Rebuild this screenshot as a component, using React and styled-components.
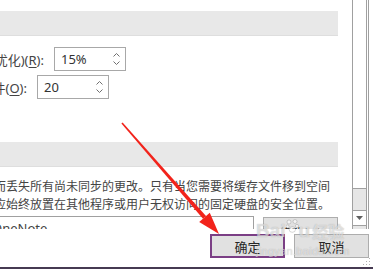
import React from 'react';
import styled, { createGlobalStyle } from 'styled-components';

const GlobalStyle = createGlobalStyle`
  html, body {
    margin: 0;
    padding: 0;
    background: #ffffff;
  }
  body {
    font-family: "Noto Sans", "Noto Sans CJK SC", sans-serif;
    color: #444444;
  }
`;

const Window = styled.div`
  position: relative;
  width: 373px;
  height: 269px;
  overflow: hidden;
  background: #ffffff;
  display: flex;
  flex-direction: column;
`;

const ScrollArea = styled.div`
  display: flex;
  height: 229px;
  flex-shrink: 0;
`;

const Viewport = styled.div`
  width: 352px;
  height: 229px;
  overflow: hidden;
  display: flex;
  flex-direction: column;
`;

const SectionBand = styled.div`
  width: 338px;
  height: 24px;
  flex-shrink: 0;
  margin-top: ${({ top }) => top}px;
  background: #e8e8e8;
  border-bottom: 1px solid #dedede;
`;

const SettingRow = styled.div`
  display: flex;
  align-items: center;
  margin-top: ${({ top }) => top}px;
  height: 24px;
`;

const LabelCell = styled.div`
  width: ${({ width }) => width}px;
  margin-right: 10px;
  display: flex;
  justify-content: flex-end;
  white-space: nowrap;
  font-size: 13px;
  color: #444444;
  flex-shrink: 0;
`;

const Key = styled.span`
  text-decoration: underline;
  text-underline-offset: 2px;
`;

const SpinBox = styled.div`
  box-sizing: border-box;
  width: 72px;
  height: 24px;
  border: 1px solid #a8a8a8;
  display: flex;
  align-items: center;
  justify-content: space-between;
  padding: 0 4px 0 6px;
  background: #ffffff;
`;

const SpinValue = styled.span`
  font-size: 13px;
  color: #333333;
`;

const SpinArrows = styled.div`
  display: flex;
  flex-direction: column;
  gap: 4px;
  padding-right: 1px;
`;

const Para = styled.div`
  margin-top: 10px;
  margin-left: -6px;
  font-size: 12px;
  line-height: 18px;
  color: #444444;
  font-family: "Noto Sans CJK SC", sans-serif;
  white-space: nowrap;
`;

const FieldRow = styled.div`
  display: flex;
  align-items: flex-start;
  margin-top: 3px;
  flex-shrink: 0;
`;

const PathField = styled.div`
  box-sizing: border-box;
  width: 264px;
  height: 23px;
  margin-left: -10px;
  border: 1px solid #a0a0a0;
  padding: 2px 0 0 1px;
  font-size: 13px;
  color: #444444;
  white-space: nowrap;
  overflow: hidden;
`;

const SideButton = styled.div`
  box-sizing: border-box;
  width: 75px;
  height: 23px;
  margin-left: 9px;
  margin-top: 1px;
  background: #e1e1e1;
  border: 1px solid #adadad;
  font-size: 12px;
  color: #262626;
  font-family: "Noto Sans CJK SC", sans-serif;
  display: flex;
  justify-content: center;
  padding-top: 6px;
`;

const ScrollBar = styled.div`
  box-sizing: border-box;
  width: 17px;
  height: 229px;
  border-right: 1px solid #a0a0a0;
  display: flex;
`;

const Track = styled.div`
  box-sizing: border-box;
  width: 15px;
  height: 100%;
  border-left: 1px solid #a0a0a0;
  border-right: 1px solid #a0a0a0;
  background: #e6e6e6;
  display: flex;
  flex-direction: column;
`;

const Thumb = styled.div`
  height: 188px;
  background: #ffffff;
  border-bottom: 1px solid #a0a0a0;
`;

const TrackGap = styled.div`
  flex: 1;
`;

const ArrowButton = styled.div`
  height: 14px;
  background: #ffffff;
  border-top: 1px solid #a0a0a0;
  border-bottom: 1px solid #a0a0a0;
  margin-bottom: 3px;
  display: flex;
  align-items: center;
  justify-content: center;
`;

const Footer = styled.div`
  display: flex;
  justify-content: flex-end;
  gap: 9px;
  padding: 5px 4px 0 0;
`;

const DialogButton = styled.div`
  box-sizing: border-box;
  width: 75px;
  height: 24px;
  background: #e1e1e1;
  border: ${({ primary }) => (primary ? '2px solid #7b3f85' : '1px solid #adadad')};
  font-size: 13px;
  color: #262626;
  font-family: "Noto Sans CJK SC", sans-serif;
  display: flex;
  align-items: center;
  justify-content: center;
`;

const BottomEdge = styled.div`
  margin-top: auto;
  height: 2px;
  background: #463a52;
`;

const Watermark = styled.div`
  position: absolute;
  left: 256px;
  top: 219px;
  pointer-events: none;
  display: flex;
  flex-direction: column;
  color: rgba(255, 255, 255, 0.55);
  text-shadow: 0 0 1px rgba(90, 90, 90, 0.45);
`;

const MarkLogo = styled.div`
  display: flex;
  align-items: flex-end;
  font-family: "Liberation Sans", sans-serif;
  font-weight: bold;
  font-size: 19px;
  line-height: 24px;
`;

const MarkCjk = styled.span`
  font-family: "Noto Sans CJK SC", sans-serif;
  font-size: 16px;
  margin-left: 2px;
`;

const MarkUrl = styled.div`
  font-family: "Liberation Sans", sans-serif;
  font-size: 11px;
  line-height: 12px;
  margin-top: 2px;
  letter-spacing: 0.3px;
`;

const Overlay = styled.svg`
  position: absolute;
  left: 0;
  top: 0;
  pointer-events: none;
`;

const Chevron = ({ up }) => (
  <svg width="7" height="4" viewBox="0 0 7 4">
    <polyline
      points={up ? '0.5,3.5 3.5,0.5 6.5,3.5' : '0.5,0.5 3.5,3.5 6.5,0.5'}
      fill="none"
      stroke="#707070"
      strokeWidth="1"
    />
  </svg>
);

const Spinner = ({ value }) => (
  <SpinBox>
    <SpinValue>{value}</SpinValue>
    <SpinArrows>
      <Chevron up />
      <Chevron />
    </SpinArrows>
  </SpinBox>
);

const PawDot = (props) => (
  <circle fill="rgba(255,255,255,0.6)" stroke="rgba(90,90,90,0.4)" strokeWidth="0.6" {...props} />
);

const App = () => (
  <Window>
    <GlobalStyle />
    <ScrollArea>
      <Viewport>
        <SectionBand top={11} />
        <SettingRow top={11}>
          <LabelCell width={44}>
            <span>
              优化)(<Key>R</Key>):
            </span>
          </LabelCell>
          <Spinner value="15%" />
        </SettingRow>
        <SettingRow top={4}>
          <LabelCell width={27}>
            <span>
              件(<Key>O</Key>):
            </span>
          </LabelCell>
          <Spinner value="20" />
        </SettingRow>
        <SectionBand top={43} />
        <Para>
          <div>而丢失所有尚未同步的更改。只有当您需要将缓存文件移到空间</div>
          <div>应始终放置在其他程序或用户无权访问的固定硬盘的安全位置。</div>
        </Para>
        <FieldRow>
          <PathField>OneNote</PathField>
          <SideButton>修改(M)</SideButton>
        </FieldRow>
      </Viewport>
      <ScrollBar>
        <Track>
          <Thumb />
          <TrackGap />
          <ArrowButton>
            <svg width="7" height="4" viewBox="0 0 7 4">
              <polygon points="0,0 7,0 3.5,4" fill="#606060" />
            </svg>
          </ArrowButton>
        </Track>
      </ScrollBar>
    </ScrollArea>
    <Footer>
      <DialogButton primary>确定</DialogButton>
      <DialogButton>取消</DialogButton>
    </Footer>
    <BottomEdge />

    <Watermark>
      <MarkLogo>
        <span>Bai</span>
        <svg width="13" height="14" viewBox="0 0 13 14" style={{ marginBottom: 10 }}>
          <PawDot cx="3" cy="3" r="2" />
          <PawDot cx="9" cy="2.5" r="2" />
          <PawDot cx="1.5" cy="7.5" r="1.6" />
          <PawDot cx="11" cy="7" r="1.6" />
          <ellipse cx="6.3" cy="10.5" rx="3.2" ry="2.8" fill="rgba(255,255,255,0.6)" stroke="rgba(90,90,90,0.4)" strokeWidth="0.6" />
        </svg>
        <span>u</span>
        <MarkCjk>经验</MarkCjk>
      </MarkLogo>
      <MarkUrl>jingyan.baidu.com</MarkUrl>
    </Watermark>

    <Overlay width="373" height="269" viewBox="0 0 373 269">
      <polygon
        points="122.6,122.5 121.4,123.5 203,218.7 206,216.1"
        fill="#f2231b"
      />
      <polygon points="219,234 199.2,222 209.8,212.8" fill="#f2231b" />
      <g fill="#b0b0b0">
        <rect x="369" y="258" width="1" height="1" />
        <rect x="366" y="261" width="1" height="1" />
        <rect x="369" y="261" width="1" height="1" />
        <rect x="363" y="264" width="1" height="1" />
        <rect x="366" y="264" width="1" height="1" />
        <rect x="369" y="264" width="1" height="1" />
      </g>
    </Overlay>
  </Window>
);

export default App;
